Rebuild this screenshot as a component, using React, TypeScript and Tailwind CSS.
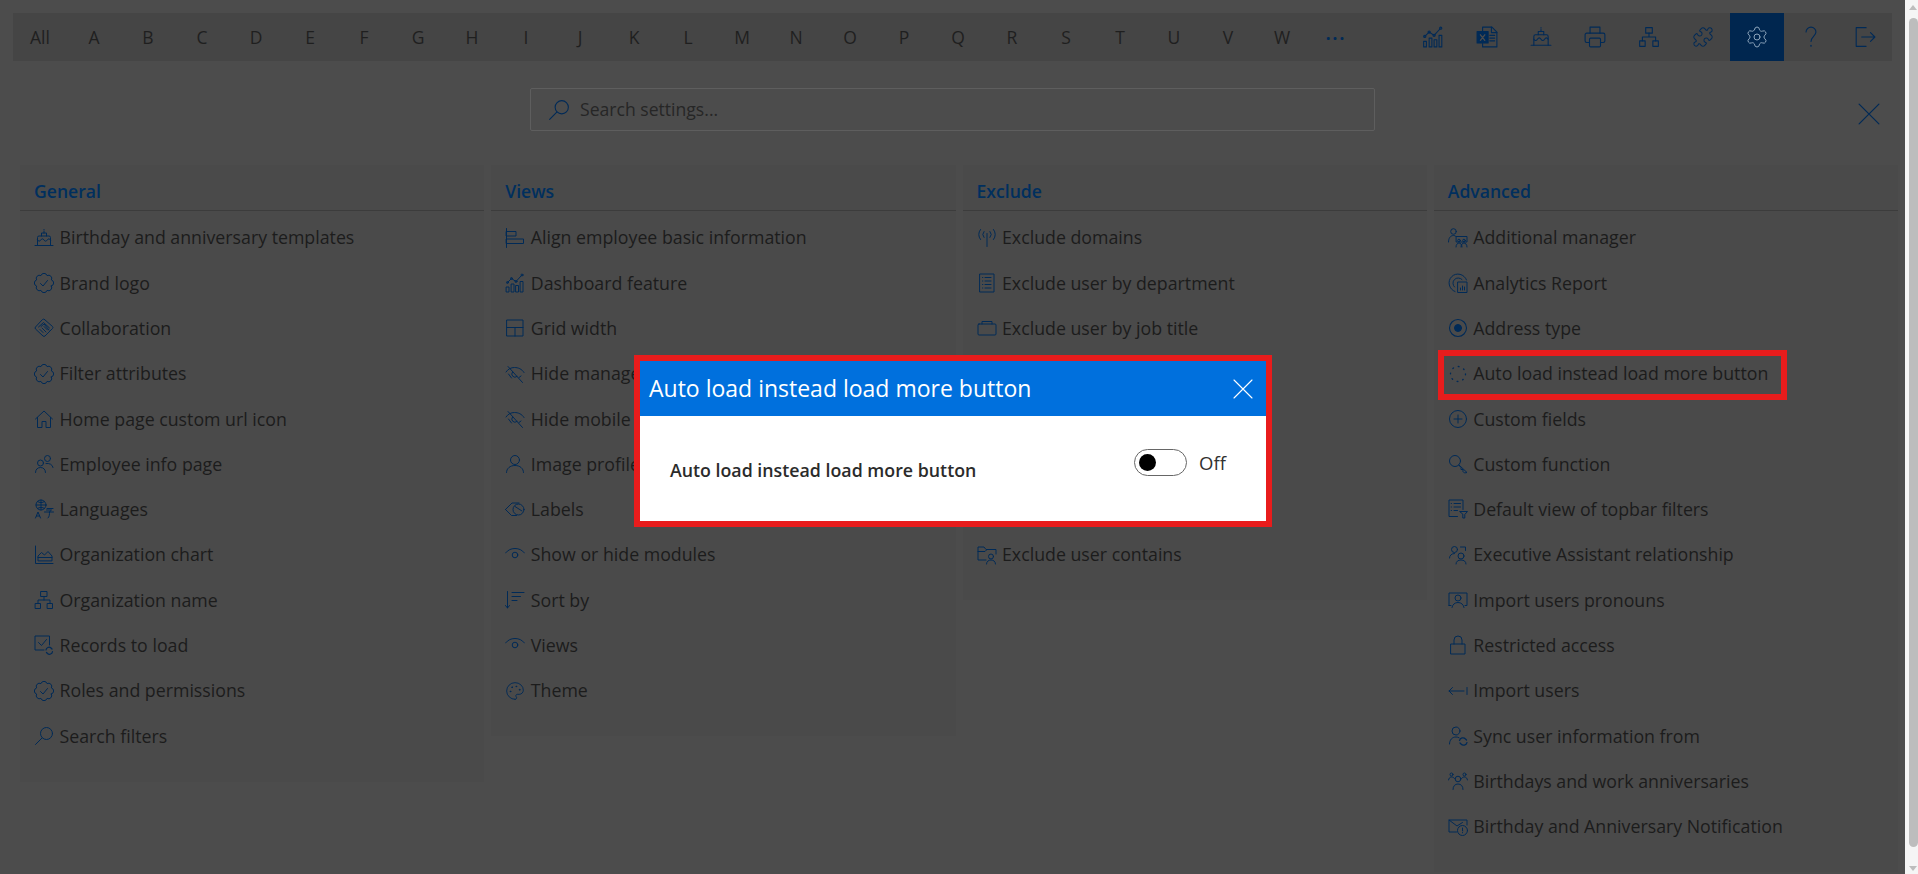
import React from 'react';
import { Palette, Puzzle, Settings } from 'lucide-react';

const Ico: React.FC<{ size?: number; children: React.ReactNode }> = ({ size = 20, children }) => (
  <svg viewBox="0 0 20 20" width={size} height={size} fill="none" stroke="currentColor" strokeWidth={1} strokeLinecap="round" strokeLinejoin="round">
    {children}
  </svg>
);

type IconProps = { size?: number };

const scallop = (() => {
  const pts = Array.from({ length: 8 }, (_, i) => {
    const a = (i * Math.PI) / 4 + Math.PI / 8;
    return `${(10 + 8 * Math.cos(a)).toFixed(2)} ${(10 + 8 * Math.sin(a)).toFixed(2)}`;
  });
  return `M${pts[0]} ` + pts.slice(1).concat(pts[0]).map(p => `A3.2 3.2 0 0 1 ${p}`).join(' ') + 'Z';
})();

const ChartIcon = ({ size }: IconProps) => (
  <Ico size={size}>
    <path d="M1.5 14h2.5v5H1.5zM6.5 11H9v8H6.5zM11 12.5h2.5V19H11zM15.5 8.5H18V19h-2.5z" />
    <path d="M2.5 9.5 6.5 5.5 11 8.5 16.5 2.5" />
    <circle cx="2.5" cy="9.5" r="1" />
    <circle cx="6.5" cy="5.5" r="1" />
    <circle cx="11" cy="8.5" r="1" />
    <circle cx="17" cy="2" r="1" />
  </Ico>
);
const ExcelIcon = ({ size }: IconProps) => (
  <Ico size={size}>
    <path d="M6 5V1h8.5L19 5.5V19H6v-3" />
    <path d="M14 1v5h5M12.5 8.5H17M12.5 11H17M12.5 13.5H17" />
    <rect x="1" y="5" width="10" height="10.5" fill="currentColor" />
    <path d="M4 8l4 5M8 8l-4 5" stroke="#4c4c4c" strokeWidth={1.2} />
  </Ico>
);
const CakeIcon = ({ size }: IconProps) => (
  <Ico size={size}>
    <path d="M10 1.5v.4M10 3.2v1.800M7.500 8V5h5v3" />
    <path d="M3.500 17.500V9.500A1.500 1.500 0 0 1 5 8h10a1.500 1.500 0 0 1 1.500 1.500v8" />
    <path d="M3.500 12c1.100 1.600 2.200 1.600 3.250 0s2.200-1.600 3.250 0 2.200 1.600 3.250 0 2.200-1.600 3.250 0" />
    <path d="M1 17.500h18" />
  </Ico>
);
const PrinterIcon = ({ size }: IconProps) => (
  <Ico size={size}>
    <path d="M5.5 6.5V1h9v5.5" />
    <path d="M5 15H2.5A1.5 1.5 0 0 1 1 13.5v-5.500A1.500 1.500 0 0 1 2.500 6.500h15A1.500 1.500 0 0 1 19 8v5.500a1.500 1.500 0 0 1-1.500 1.500H15" />
    <rect x="5" y="11" width="10" height="8" rx="1" />
  </Ico>
);
const OrgIcon = ({ size }: IconProps) => (
  <Ico size={size}>
    <rect x="7" y="1.500" width="6" height="5" />
    <rect x="1.500" y="13.500" width="5" height="5" />
    <rect x="13.500" y="13.500" width="5" height="5" />
    <path d="M10 6.500v3.500M4 13.500V10h12v3.500" />
  </Ico>
);
const HelpIcon = ({ size }: IconProps) => (
  <Ico size={size}>
    <path d="M5.500 5.500C5.500 3 7.500 1 10 1s4.500 2 4.500 4.500c0 3.500-4.500 4.500-4.500 8.500" />
    <path d="M10 17.500v1" />
  </Ico>
);
const LogoutIcon = ({ size }: IconProps) => (
  <Ico size={size}>
    <path d="M11 1.500H2v17h9" />
    <path d="M7 10h12M15 6l4 4-4 4" />
  </Ico>
);
const SearchIcon = ({ size }: IconProps) => (
  <Ico size={size}>
    <circle cx="12.500" cy="7.500" r="6" />
    <path d="M8 12 1.500 18.500" />
  </Ico>
);
const CloseIcon = ({ size }: IconProps) => (
  <Ico size={size}>
    <path d="M1 1l18 18M19 1 1 19" strokeWidth={1.1} />
  </Ico>
);
const BadgeIcon = () => (
  <Ico>
    <path d={scallop} />
    <path d="M6.500 10.500 9 13l4.500-5.500" />
  </Ico>
);
const HandshakeIcon = () => (
  <Ico>
    <path d="M10.500 1.500 18.500 8.500a1.500 1.500 0 0 1 0 2L11 18a1.500 1.500 0 0 1-2 0L1.500 11a1.500 1.500 0 0 1 0-2L8.500 1.500a1.500 1.500 0 0 1 2 0z" />
    <path d="M4.500 9 9.500 4.500l6 5.500M7 8.500l3-2.500 5 6M6 11.500l3 3M8 10l4 4M10 8.500l3.500 3.500" />
  </Ico>
);
const HomeIcon = () => (
  <Ico>
    <path d="M1.500 10 10 2l8.500 8" />
    <path d="M3.500 8.500V18.500H8v-6h4v6h4.500V8.500" />
  </Ico>
);
const PeopleIcon = () => (
  <Ico>
    <circle cx="13.500" cy="4.500" r="3" />
    <circle cx="6.500" cy="9" r="3" />
    <path d="M1.500 18.500c0-3 2-5 5-5s5 2 5 5M12 9.500c3.500-.5 6.500 1 7 4" />
  </Ico>
);
const LanguagesIcon = () => (
  <Ico>
    <circle cx="7" cy="6" r="5" />
    <path d="M2 6h10M7 1v10M3.500 2.500c2 1.500 5 1.500 7 0M3.500 9.500c2-1.500 5-1.500 7 0" />
    <path d="M1.500 19l2.500-6 2.500 6M2.500 17H5.500" />
    <path d="M13 9.500h6M10.500 13h9M15.500 13c0 2 0 5-1.500 6M12.500 11h5l-2 2" />
  </Ico>
);
const AreaIcon = () => (
  <Ico>
    <path d="M1.500 1v17.500H19" />
    <path d="M4 15.500V11l3.500-3.500 3 2.500 3.500-3.500 4 4.500v4.500z" />
    <path d="M4 12.500h14" />
  </Ico>
);
const RecordsIcon = () => (
  <Ico>
    <path d="M10 15H1V1h14.500v9" />
    <path d="M4.500 7.500 7.500 10.500 12.500 4.500" />
    <path d="M12 15a3 3 0 0 1 5-2l1 1M18.500 16.500a3 3 0 0 1-5 2l-1-1" strokeWidth={1.2} />
  </Ico>
);
const AlignIcon = () => (
  <Ico>
    <path d="M1.500 .5v19" />
    <rect x="1.500" y="3.500" width="9.500" height="4.500" />
    <rect x="1.500" y="11" width="17" height="4.500" />
  </Ico>
);
const GridIcon = () => (
  <Ico>
    <rect x="2" y="2" width="16" height="16" />
    <path d="M2 9.500h16M10 9.500V18" />
  </Ico>
);
const EyeOffIcon = () => (
  <Ico>
    <path d="M1 8C3 5 6 3.500 9.500 3.500c3.500 0 7.500 1.500 9.500 5" />
    <path d="M3 2.500 17.500 18.500" />
    <path d="M7.500 8a3.200 3.200 0 0 0 4.500 4.500M16 12l-2 1.500" />
    <path d="M3.500 10l3 4" />
  </Ico>
);
const UserIcon = () => (
  <Ico>
    <circle cx="10" cy="6" r="4.500" />
    <path d="M1.500 18.500c0-4 3.500-7 8.500-7s8.500 3 8.500 7" />
  </Ico>
);
const TagIcon = () => (
  <Ico>
    <path d="M.5 10.500 7 4h7" />
    <path d="M.5 10.500 6.500 16.500h5" />
    <circle cx="13.500" cy="10.500" r="5.500" />
    <path d="M10 7.500l7 4.500" />
  </Ico>
);
const EyeIcon = () => (
  <Ico>
    <path d="M.5 8C3 5 6 3.500 10 3.500S17 5 19.500 8" />
    <circle cx="10" cy="10" r="2.800" />
  </Ico>
);
const SortIcon = () => (
  <Ico>
    <path d="M2.500 1.500V18M.5 15.500l2 2.500 2-2.500" />
    <path d="M7 2.500h12M7 6.500h8.500M7 10.500h5" />
  </Ico>
);
const AntennaIcon = () => (
  <Ico>
    <path d="M10 5.500V18.500" />
    <path d="M7 3.500a4.500 4.500 0 0 0 0 6M13 3.500a4.500 4.500 0 0 1 0 6" />
    <path d="M3.500 1.500a8.500 8.500 0 0 0 0 10M16.500 1.500a8.500 8.500 0 0 1 0 10" />
  </Ico>
);
const DeptIcon = () => (
  <Ico>
    <rect x="3" y="1" width="14" height="18" />
    <path d="M8 4.500h6M8 8h6M8 11.500h6M8 15h6M5.500 4.500h.3M5.500 8h.3M5.500 11.500h.3M5.500 15h.3" />
  </Ico>
);
const BriefcaseIcon = () => (
  <Ico>
    <rect x="1" y="6" width="18" height="11" rx="1" />
    <path d="M5 6V3.500h10V6" />
  </Ico>
);
const FolderUserIcon = () => (
  <Ico>
    <path d="M9 15H1V2h6l2 2.500h10V9" />
    <path d="M1 6.500h7l2-2" />
    <circle cx="14" cy="11.500" r="2.500" />
    <path d="M9.500 19c0-2.500 2-4 4.500-4s4.500 1.500 4.500 4" />
  </Ico>
);
const ManagerIcon = () => (
  <Ico>
    <circle cx="5.500" cy="3.500" r="2.800" />
    <path d="M.5 14c0-4 2-6.500 5-6.500 1 0 2 .3 2.500 1" />
    <rect x="8.500" y="8.500" width="10.500" height="5.500" />
    <circle cx="11" cy="12.500" r="1.300" />
    <circle cx="16" cy="12.500" r="1.300" />
    <path d="M8 19c0-2.500 1.500-4 3-4s3 1.500 3 4M13 19c0-2.500 1.500-4 3-4s3 1.500 3 4" />
  </Ico>
);
const AnalyticsIcon = () => (
  <Ico>
    <path d="M7 18.500A9 9 0 1 1 18.500 7" />
    <path d="M6.500 14A5.200 5.200 0 1 1 14 6.500" />
    <rect x="10" y="9" width="9" height="10.500" />
    <path d="M12.500 17v-2M14.500 17v-4M16.500 17v-3" />
  </Ico>
);
const RadioIcon = () => (
  <Ico>
    <circle cx="10" cy="10" r="8.500" strokeWidth={1.1} />
    <circle cx="10" cy="10" r="3.500" fill="currentColor" />
  </Ico>
);
const SpinnerIcon = () => (
  <Ico>
    <circle cx="10" cy="10" r="7.500" strokeDasharray="0.8 5.100" strokeWidth={1.3} />
  </Ico>
);
const PlusCircleIcon = () => (
  <Ico>
    <circle cx="10" cy="10" r="8.500" />
    <path d="M10 6v8M6 10h8" />
  </Ico>
);
const KeyIcon = () => (
  <Ico>
    <circle cx="7" cy="7" r="5.500" />
    <path d="M11 11l8 7.500-2.500.5-1.500-1.500v-2h-2v-2l-2-2" />
  </Ico>
);
const DefaultViewIcon = () => (
  <Ico>
    <path d="M9.500 17.500H1V1h14v9.500" />
    <path d="M6 4.500h6.500M6 8h6.500M6 11.500h3.500M3.200 4.500h.3M3.200 8h.3M3.200 11.500h.3" />
    <path d="M12 12.500h7.500L16.800 15.500v3.500h-2v-3.500z" />
  </Ico>
);
const ExecIcon = () => (
  <Ico>
    <circle cx="6.500" cy="4.500" r="3" />
    <path d="M1.500 13c0-2.500 2-4.500 5-4.500" />
    <circle cx="13" cy="11" r="3" />
    <path d="M8 19c0-2.500 2-4 5-4s5 1.500 5 4" />
    <path d="M12.500 2h5v3.500" />
  </Ico>
);
const PronounIcon = () => (
  <Ico>
    <path d="M1 15.500V3h18v12.500h-2" />
    <path d="M1 15.500h2" />
    <circle cx="10" cy="8" r="3" />
    <path d="M4 17.500c.5-3 2.800-5 6-5s5.500 2 6 5" />
  </Ico>
);
const LockIcon = () => (
  <Ico>
    <rect x="3" y="9" width="14" height="10" />
    <path d="M6 9V5a4 4 0 0 1 8 0v4" />
  </Ico>
);
const ImportIcon = () => (
  <Ico>
    <path d="M1 10h15M4.500 6.500 1 10l3.500 3.500M19 6.500v7" />
  </Ico>
);
const SyncUserIcon = () => (
  <Ico>
    <circle cx="8" cy="5" r="4" />
    <path d="M1.500 18c0-4 2.500-7 6.500-7 1 0 2 .2 3 .7" />
    <path d="M11.500 14.500a3.500 3.500 0 0 1 6-1.500l1 1M19 16.500a3.500 3.500 0 0 1-6 1.500l-1-1" strokeWidth={1.2} />
  </Ico>
);
const BirthdaysIcon = () => (
  <Ico>
    <circle cx="10" cy="8" r="2.800" />
    <path d="M5 18.500c0-3.500 2-5.500 5-5.500s5 2 5 5.500" />
    <circle cx="3.500" cy="3.500" r="1.500" />
    <circle cx="16.500" cy="3.500" r="1.500" />
    <path d="M.5 9c.5-2 1.500-3 3-3s2 .5 3 1.500M19.500 9c-.5-2-1.500-3-3-3s-2 .5-3 1.500" />
  </Ico>
);
const MailClockIcon = () => (
  <Ico>
    <path d="M8.500 15H1V3h18v5" />
    <path d="M1 3l8 6 5.500-3.500" />
    <circle cx="14.500" cy="13.500" r="5" />
    <path d="M14.500 11v3h.3M14.500 15.500v.3" />
  </Ico>
);

type Item = { label: string; icon: React.ReactNode };

const general: Item[] = [
  { label: 'Birthday and anniversary templates', icon: <CakeIcon /> },
  { label: 'Brand logo', icon: <BadgeIcon /> },
  { label: 'Collaboration', icon: <HandshakeIcon /> },
  { label: 'Filter attributes', icon: <BadgeIcon /> },
  { label: 'Home page custom url icon', icon: <HomeIcon /> },
  { label: 'Employee info page', icon: <PeopleIcon /> },
  { label: 'Languages', icon: <LanguagesIcon /> },
  { label: 'Organization chart', icon: <AreaIcon /> },
  { label: 'Organization name', icon: <OrgIcon /> },
  { label: 'Records to load', icon: <RecordsIcon /> },
  { label: 'Roles and permissions', icon: <BadgeIcon /> },
  { label: 'Search filters', icon: <SearchIcon /> },
];

const views: Item[] = [
  { label: 'Align employee basic information', icon: <AlignIcon /> },
  { label: 'Dashboard feature', icon: <ChartIcon /> },
  { label: 'Grid width', icon: <GridIcon /> },
  { label: 'Hide manager', icon: <EyeOffIcon /> },
  { label: 'Hide mobile', icon: <EyeOffIcon /> },
  { label: 'Image profile', icon: <UserIcon /> },
  { label: 'Labels', icon: <TagIcon /> },
  { label: 'Show or hide modules', icon: <EyeIcon /> },
  { label: 'Sort by', icon: <SortIcon /> },
  { label: 'Views', icon: <EyeIcon /> },
  { label: 'Theme', icon: <Palette size={20} strokeWidth={1.1} /> },
];

// rows 4 to 7 of this list sit behind the dialog
const exclude: (Item | null)[] = [
  { label: 'Exclude domains', icon: <AntennaIcon /> },
  { label: 'Exclude user by department', icon: <DeptIcon /> },
  { label: 'Exclude user by job title', icon: <BriefcaseIcon /> },
  null,
  null,
  null,
  null,
  { label: 'Exclude user contains', icon: <FolderUserIcon /> },
];

const advanced: Item[] = [
  { label: 'Additional manager', icon: <ManagerIcon /> },
  { label: 'Analytics Report', icon: <AnalyticsIcon /> },
  { label: 'Address type', icon: <RadioIcon /> },
  { label: 'Auto load instead load more button', icon: <SpinnerIcon /> },
  { label: 'Custom fields', icon: <PlusCircleIcon /> },
  { label: 'Custom function', icon: <KeyIcon /> },
  { label: 'Default view of topbar filters', icon: <DefaultViewIcon /> },
  { label: 'Executive Assistant relationship', icon: <ExecIcon /> },
  { label: 'Import users pronouns', icon: <PronounIcon /> },
  { label: 'Restricted access', icon: <LockIcon /> },
  { label: 'Import users', icon: <ImportIcon /> },
  { label: 'Sync user information from', icon: <SyncUserIcon /> },
  { label: 'Birthdays and work anniversaries', icon: <BirthdaysIcon /> },
  { label: 'Birthday and Anniversary Notification', icon: <MailClockIcon /> },
];

const letters = ['All', ...'ABCDEFGHIJKLMNOPQRSTUVW'.split('')];

const toolbar = [
  <ChartIcon size={22} />,
  <ExcelIcon size={22} />,
  <CakeIcon size={22} />,
  <PrinterIcon size={22} />,
  <OrgIcon size={22} />,
  <Puzzle size={22} strokeWidth={1.1} />,
  <Settings size={24} strokeWidth={1} />,
  <HelpIcon size={22} />,
  <LogoutIcon size={22} />,
];

const Row: React.FC<{ item: Item | null; marked?: boolean }> = ({ item, marked }) => (
  <div className="relative flex h-[45.3px] items-center pl-[14px]">
    {item && (
      <>
        <span className="flex w-[25.5px] shrink-0 text-[#002a57]">{item.icon}</span>
        <span className="whitespace-nowrap text-[17.75px] text-[#1c1c1c]">{item.label}</span>
      </>
    )}
    {marked && <div className="absolute left-[4px] top-[-1px] h-[50px] w-[349px] border-[6px] border-[#e81c1c]" />}
  </div>
);

const Section: React.FC<{ title: string; items: (Item | null)[]; markedLabel?: string }> = ({ title, items, markedLabel }) => (
  <div className="bg-[#4a4a4a]">
    <h2 className="flex h-[46px] items-center border-b border-[#3c3c3c] pl-[14px] pt-[7px] text-[17.6px] font-semibold text-[#002f5e]">{title}</h2>
    <div className="pt-[4px] pb-[23px]">
      {items.map((item, i) => (
        <Row key={i} item={item} marked={!!item && item.label === markedLabel} />
      ))}
    </div>
  </div>
);

export default function App() {
  return (
    <div className="relative flex h-[874px] overflow-hidden bg-[#4c4c4c] font-['Open_Sans',sans-serif]">
      <div className="min-w-0 flex-1">
        <div className="mx-[13px] mt-[13px] flex h-[48px] items-center bg-[#454545]">
          {letters.map(l => (
            <span key={l} className="w-[54px] text-center text-[17.5px] text-[#1f1f1f]">{l}</span>
          ))}
          <span className="w-[54px] -translate-y-1 text-center text-[17px] font-bold leading-none tracking-[2px] text-[#002a57]">...</span>
          <div className="ml-auto flex h-full">
            {toolbar.map((icon, i) => (
              <span key={i} className={`flex w-[54px] items-center justify-center ${i === 6 ? 'bg-[#00264f] text-[#8fa6bd]' : 'text-[#002a57]'}`}>
                {icon}
              </span>
            ))}
          </div>
        </div>

        <div className="mx-[13px] mt-[27px] flex">
          <div className="ml-[517px] flex h-[43px] w-[845px] items-center rounded-[2px] border border-[#5e5e5e] pl-[17px]">
            <span className="text-[#002a57]"><SearchIcon size={22} /></span>
            <span className="ml-[10px] text-[17.6px] text-[#262626]">Search settings...</span>
          </div>
          <div className="ml-auto mr-[12px] mt-[15px] text-[#002a57]"><CloseIcon size={22} /></div>
        </div>

        <div className="mt-[34px] grid grid-cols-4 items-start gap-[7px] pl-[20px] pr-[7px]">
          <Section title="General" items={general} />
          <Section title="Views" items={views} />
          <Section title="Exclude" items={exclude} />
          <Section title="Advanced" items={advanced} markedLabel="Auto load instead load more button" />
        </div>
      </div>

      {/* scrollbar */}
      <div className="flex w-[13px] shrink-0 flex-col items-center bg-[#f5f5f5] pl-[3px]">
        <div className="mt-[5px] h-0 w-0 border-x-[4px] border-b-[5px] border-x-transparent border-b-[#bdbdbd]" />
        <div className="mt-[8px] w-[9px] flex-1 rounded-full bg-[#bdbdbd]" />
        <div className="mb-[3px] mt-[19px] h-0 w-0 border-x-[4px] border-t-[5px] border-x-transparent border-t-[#bdbdbd]" />
      </div>

      {/* dialog */}
      <div className="absolute left-[634px] top-[355px] w-[638px] border-[6px] border-[#e81c1c] bg-white">
        <div className="flex h-[55px] items-center justify-between bg-[#0070dd] pl-[9px] pr-[13px] text-white">
          <span className="text-[23px]">Auto load instead load more button</span>
          <CloseIcon size={20} />
        </div>
        <div className="flex h-[105px] pl-[30px] pr-[38px]">
          <span className="mt-[41px] text-[17.8px] font-semibold leading-[26px] text-[#2b2b2b]">Auto load instead load more button</span>
          <div className="ml-auto mt-[33px] flex h-[27px] items-center">
            <div className="flex h-[27px] w-[53px] items-center rounded-full border border-[#666] pl-[4px]">
              <div className="h-[17px] w-[17px] rounded-full bg-black" />
            </div>
            <span className="ml-[12px] w-[29px] text-[18.5px] text-[#323130]">Off</span>
          </div>
        </div>
      </div>
    </div>
  );
}
